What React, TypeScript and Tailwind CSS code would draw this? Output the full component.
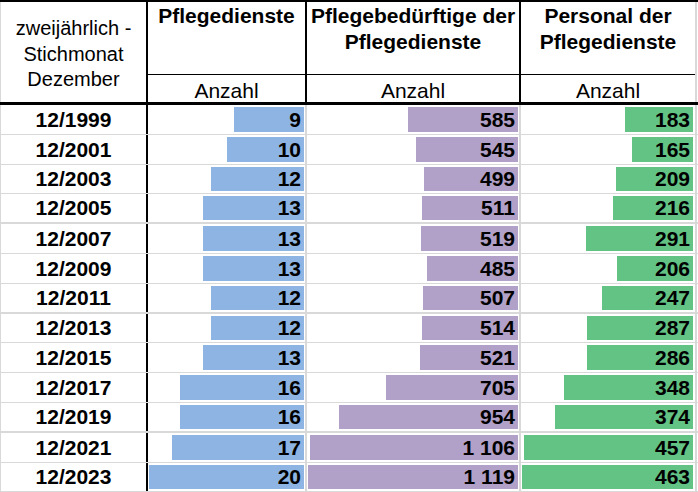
const rows = [
    { year: "12/1999", dienste: 9, beduerftige: 585, personal: 183 },
    { year: "12/2001", dienste: 10, beduerftige: 545, personal: 165 },
    { year: "12/2003", dienste: 12, beduerftige: 499, personal: 209 },
    { year: "12/2005", dienste: 13, beduerftige: 511, personal: 216 },
    { year: "12/2007", dienste: 13, beduerftige: 519, personal: 291 },
    { year: "12/2009", dienste: 13, beduerftige: 485, personal: 206 },
    { year: "12/2011", dienste: 12, beduerftige: 507, personal: 247 },
    { year: "12/2013", dienste: 12, beduerftige: 514, personal: 287 },
    { year: "12/2015", dienste: 13, beduerftige: 521, personal: 286 },
    { year: "12/2017", dienste: 16, beduerftige: 705, personal: 348 },
    { year: "12/2019", dienste: 16, beduerftige: 954, personal: 374 },
    { year: "12/2021", dienste: 17, beduerftige: 1106, personal: 457 },
    { year: "12/2023", dienste: 20, beduerftige: 1119, personal: 463 },
]

// thousands separated by a space, as in the source table
const fmt = (n: number) => n.toString().replace(/\B(?=(\d{3})+(?!\d))/g, "\u00a0")

const Bar = ({ value, max, color }: { value: number; max: number; color: string }) => (
    <div className="flex h-full justify-end px-[1px] pt-[2px] pb-[2px]">
        <div className={`flex h-full items-end justify-end ${color}`} style={{ width: `${(value / max) * 100}%` }}>
            <span className="whitespace-nowrap pr-[3px] text-[21px] font-bold leading-[24px] text-black">{fmt(value)}</span>
        </div>
    </div>
)

const HeaderCol = ({ title, width, last }: { title: string[]; width: string; last?: boolean }) => (
    <div className={`${width} flex flex-col border-r-2 ${last ? "border-r-[#d9d9d9]" : "border-r-black"}`}>
        <div className="h-[73px] border-b border-black pt-[1px] text-center text-[21px] font-bold leading-[25.5px]">
            {title.map((t) => (
                <div key={t}>{t}</div>
            ))}
        </div>
        <div className="h-[26px] pt-[3px] text-center text-[21px] leading-[26px]">Anzahl</div>
    </div>
)

export default function App() {
    return (
        <div className="w-[698px] h-[492px] overflow-hidden bg-white text-black" style={{ fontFamily: '"Liberation Sans", Arial, sans-serif' }}>
            <div className="flex border-t-2 border-b-[3px] border-black">
                <div className="w-[148px] h-[100px] border-l border-l-[#d9d9d9] border-r-2 border-r-black pt-[14px] text-center text-[20px] leading-[25.5px]">
                    <div>zweijährlich -</div>
                    <div>Stichmonat</div>
                    <div>Dezember</div>
                </div>
                <HeaderCol title={["Pflegedienste"]} width="w-[159px]" />
                <HeaderCol title={["Pflegebedürftige der", "Pflegedienste"]} width="w-[214px]" />
                <HeaderCol title={["Personal der", "Pflegedienste"]} width="w-[176px]" last />
            </div>

            {rows.map((r, i) => (
                <div key={r.year} className={`flex h-[29.8px] border-[#d9d9d9] ${i === 3 || i === 6 || i === 10 ? "border-b-2" : "border-b"}`}>
                    <div className="w-[148px] flex items-end justify-center border-l border-l-[#d9d9d9] border-r-2 border-r-black pb-[2px] text-[21px] font-bold leading-[24px]">
                        {r.year}
                    </div>
                    <div className="w-[159px] border-r-2 border-r-[#d9d9d9]">
                        <Bar value={r.dienste} max={20} color="bg-[#8db4e2]" />
                    </div>
                    <div className="w-[214px] border-r-2 border-r-[#d9d9d9]">
                        <Bar value={r.beduerftige} max={1119} color="bg-[#b1a0c7]" />
                    </div>
                    <div className="w-[176px] border-r-2 border-r-[#d9d9d9] pr-[1px]">
                        <Bar value={r.personal} max={463} color="bg-[#63c384]" />
                    </div>
                </div>
            ))}
        </div>
    )
}
